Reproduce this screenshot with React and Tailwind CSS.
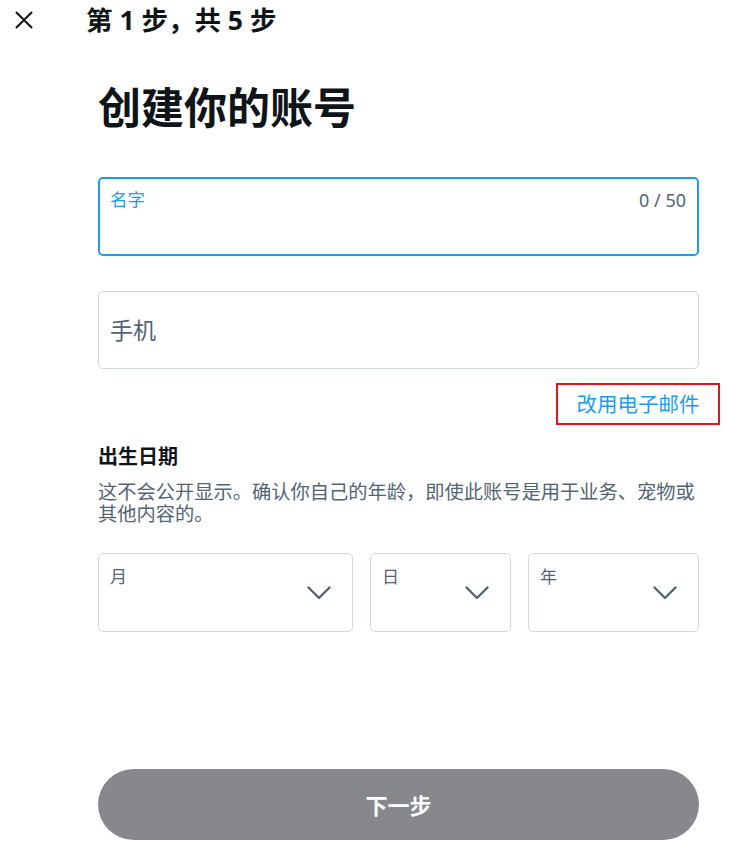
import React from "react";

const FONT = { fontFamily: '"Noto Sans", "Noto Sans CJK SC", sans-serif' };

function Chevron() {
  return (
    <svg width="24" height="14" viewBox="0 0 24 14" fill="none">
      <path d="M1.5 1.5 L12 12 L22.5 1.5" stroke="#536471" strokeWidth="2.4" strokeLinecap="round" strokeLinejoin="round" />
    </svg>
  );
}

function DateBox({ label, className }) {
  return (
    <div className={"relative h-[79px] rounded-[5px] border border-[#cfd9de] " + className}>
      <span className="absolute left-[11px] top-[12px] text-[17px] leading-[22px] text-[#536471]">{label}</span>
      <span className="absolute right-[21px] top-[32px]">
        <Chevron />
      </span>
    </div>
  );
}

export default function App() {
  return (
    <div className="w-[734px] h-[844px] bg-white text-[#0f1419] overflow-hidden" style={FONT}>
      <div className="flex items-center h-[40px] pl-[15px]">
        <svg width="18" height="18" viewBox="0 0 18 18" fill="none">
          <path d="M1.5 1.5 L16.5 16.5 M16.5 1.5 L1.5 16.5" stroke="#0f1419" strokeWidth="2" strokeLinecap="round" />
        </svg>
        <span className="ml-[53px] text-[26.5px] leading-[32px] font-bold">第 1 步，共 5 步</span>
      </div>

      <div className="ml-[98px] w-[601px]">
        <h1 className="mt-[42px] text-[43px] leading-[52px] font-bold">创建你的账号</h1>

        <div className="relative mt-[43px] h-[79px] rounded-[5px] border-2 border-[#1d9bf0]">
          <span className="absolute left-[10px] top-[9px] text-[17.5px] leading-[22px] text-[#1d9bf0]">名字</span>
          <span className="absolute right-[11px] top-[10px] text-[18px] leading-[22px] text-[#536471]">0 / 50</span>
        </div>

        <div className="mt-[35px] h-[78px] rounded-[5px] border border-[#cfd9de] flex items-center pl-[11px]">
          <span className="text-[23px] leading-[28px] text-[#536471]">手机</span>
        </div>

        <div className="flex justify-end mt-[14px] -mr-[21px]">
          <div className="border-2 border-[#e0141e] h-[42px] w-[164px] flex items-center justify-center">
            <span className="text-[20.5px] leading-[26px] text-[#1d9bf0]">改用电子邮件</span>
          </div>
        </div>

        <div className="mt-[19px] text-[20px] leading-[26px] font-bold">出生日期</div>
        <p className="mt-[11px] text-[19.25px] leading-[22px] text-[#536471]">
          这不会公开显示。确认你自己的年龄，即使此账号是用于业务、宠物或其他内容的。
        </p>

        <div className="mt-[28px] flex gap-[17px]">
          <DateBox label="月" className="w-[255px]" />
          <DateBox label="日" className="w-[141px]" />
          <DateBox label="年" className="w-[171px]" />
        </div>

        <div className="mt-[137px] h-[71px] rounded-full bg-[#87888c] flex items-center justify-center">
          <span className="text-[22px] leading-[26px] font-bold text-white">下一步</span>
        </div>
      </div>
    </div>
  );
}
